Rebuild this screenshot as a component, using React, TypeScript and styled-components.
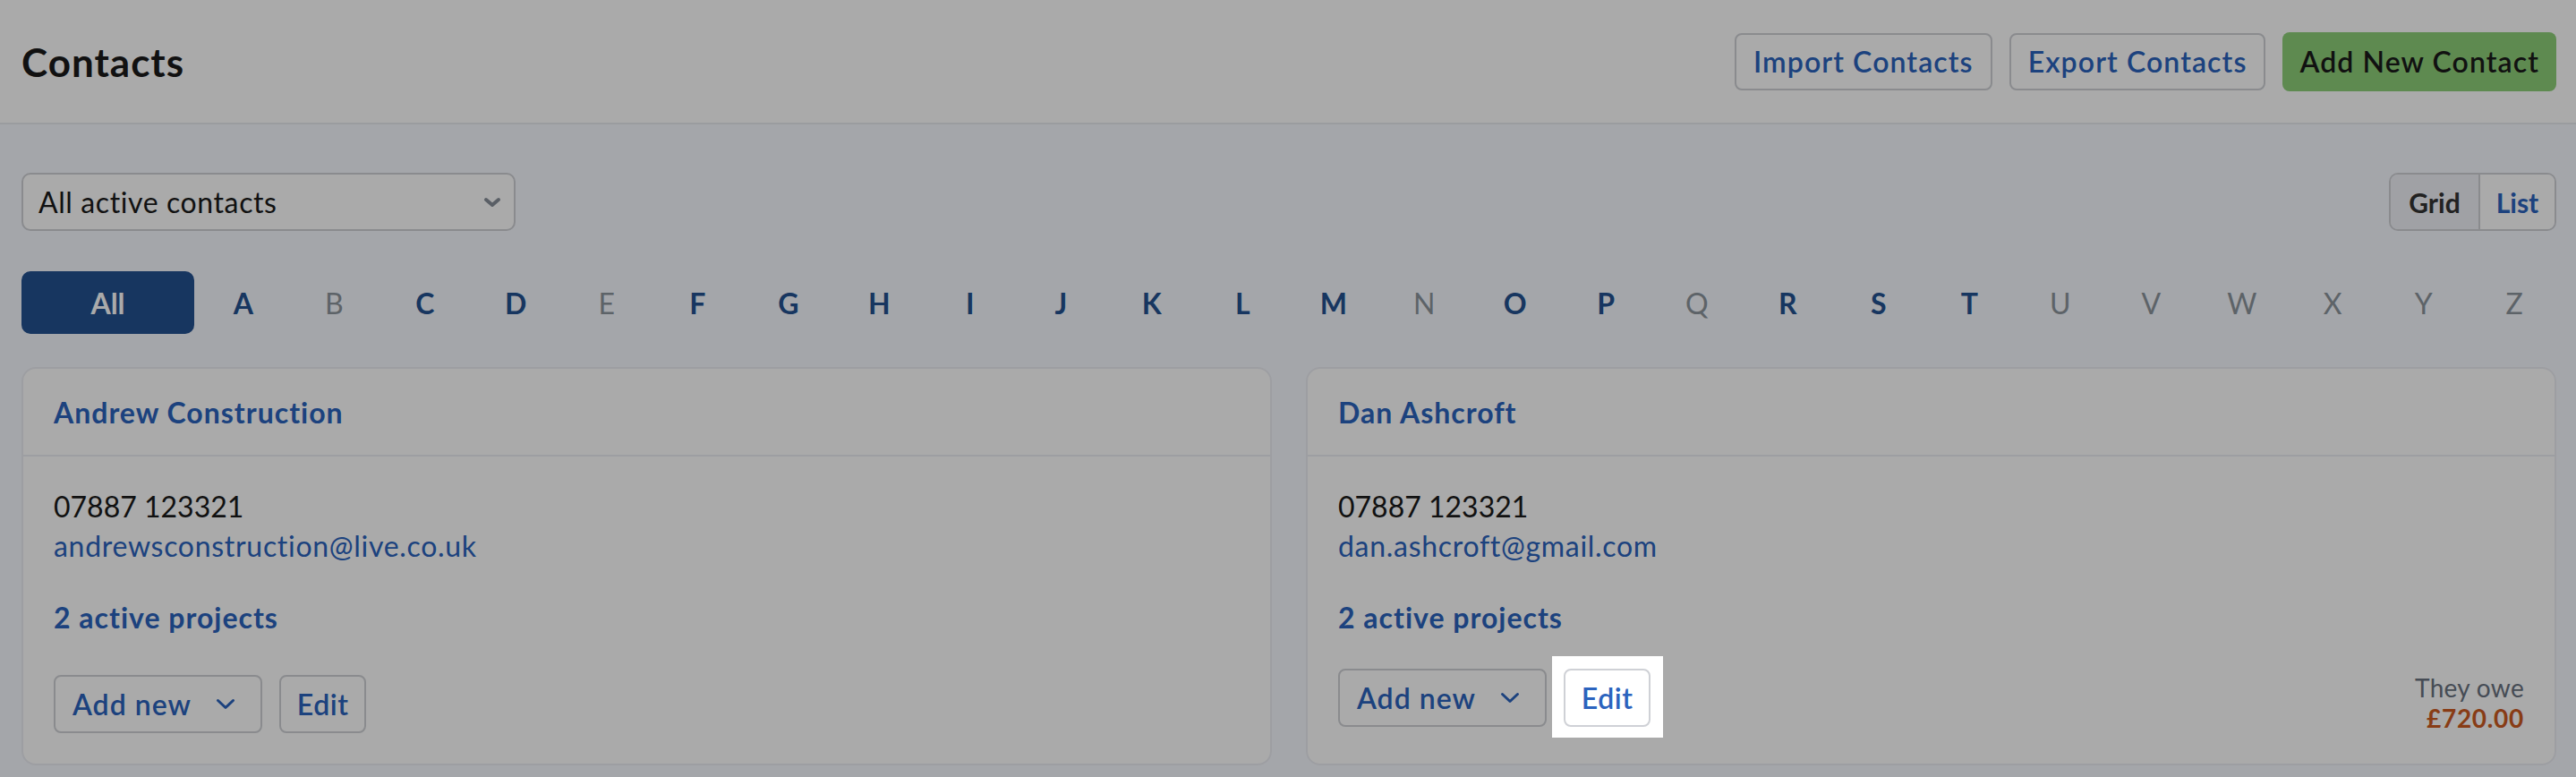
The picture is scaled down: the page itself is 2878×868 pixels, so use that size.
import React from "react";
import styled, { createGlobalStyle } from "styled-components";

const LINK = "#2b63be";
const NAVY = "#235190";
const LINE = "#cfd1d6";
const SOFT = "#eceef4";
const INK = "#1a1a1a";

const GlobalStyle = createGlobalStyle`
  * { box-sizing: border-box; }
  html, body { margin: 0; padding: 0; background: #f7f9ff; }
  body {
    min-height: 100vh;
    font-family: Lato, "Noto Sans", "Liberation Sans", sans-serif;
    color: ${INK};
  }
  button { font-family: inherit; cursor: pointer; }
`;

const Page = styled.div`
  min-height: 100vh;
`;

const Header = styled.header`
  height: 139px;
  display: flex;
  align-items: center;
  justify-content: space-between;
  padding: 0 22px 0 24px;
  background: #ffffff;
  border-bottom: 2px solid #e8eaef;
`;

const Title = styled.h1`
  margin: 0;
  font-size: 44px;
  line-height: 1;
  font-weight: 700;
  letter-spacing: 1px;
  color: ${INK};
`;

const HeaderActions = styled.div`
  display: flex;
  align-items: center;
  gap: 19px;
`;

const OutlineButton = styled.button`
  height: 64px;
  padding: 0 19px;
  border: 2px solid ${LINE};
  border-radius: 8px;
  background: #ffffff;
  color: ${LINK};
  font-size: 32px;
  font-weight: 600;
  letter-spacing: 1.1px;
`;

const PrimaryButton = styled.button`
  height: 66px;
  padding: 0 19px;
  border: none;
  border-radius: 8px;
  background: #8dcf78;
  color: ${INK};
  font-size: 32px;
  font-weight: 600;
  letter-spacing: 1.1px;
`;

const Main = styled.main`
  padding: 54px 22px 13px 24px;
`;

const Toolbar = styled.div`
  display: flex;
  align-items: center;
  justify-content: space-between;
`;

const SelectBox = styled.button`
  width: 552px;
  height: 65px;
  display: flex;
  align-items: center;
  justify-content: space-between;
  padding: 0 14px 0 17px;
  border: 2px solid ${LINE};
  border-radius: 10px;
  background: #ffffff;
  color: ${INK};
  font-size: 32px;
  font-weight: 400;
  letter-spacing: 0.6px;
`;

const ViewToggle = styled.div`
  display: flex;
  height: 65px;
  border: 2px solid ${LINE};
  border-radius: 10px;
  overflow: hidden;
`;

const ToggleOption = styled.button<{ $active?: boolean; $w: number }>`
  width: ${(p) => p.$w}px;
  height: 100%;
  border: none;
  border-right: ${(p) => (p.$active ? `2px solid ${LINE}` : "none")};
  background: ${(p) => (p.$active ? "#f0f2f8" : "#ffffff")};
  color: ${(p) => (p.$active ? "#333333" : LINK)};
  font-size: 30px;
  font-weight: 700;
  padding: 0;
`;

const AlphaBar = styled.nav`
  display: flex;
  align-items: center;
  gap: 8px;
  height: 70px;
  margin-top: 45px;
`;

const AllButton = styled.button`
  flex: none;
  width: 193px;
  height: 70px;
  border: none;
  border-radius: 10px;
  background: ${NAVY};
  color: #ffffff;
  font-size: 32px;
  font-weight: 700;
`;

const Letter = styled.button<{ $enabled: boolean }>`
  flex: 1;
  padding: 0;
  border: none;
  background: none;
  text-align: center;
  font-size: 32px;
  font-weight: ${(p) => (p.$enabled ? 700 : 400)};
  color: ${(p) => (p.$enabled ? NAVY : "#8c959c")};
`;

const CardGrid = styled.section`
  display: grid;
  grid-template-columns: 1fr 1fr;
  gap: 38px;
  margin-top: 37px;
`;

const Card = styled.article`
  display: flex;
  flex-direction: column;
  background: #ffffff;
  border: 2px solid ${SOFT};
  border-radius: 16px;
`;

const CardHeader = styled.div`
  height: 98px;
  display: flex;
  align-items: center;
  padding: 0 34px;
  border-bottom: 2px solid ${SOFT};
`;

const ContactName = styled.a`
  font-size: 32px;
  font-weight: 700;
  letter-spacing: 1px;
  color: ${LINK};
  text-decoration: none;
`;

const CardBody = styled.div`
  flex: 1;
  display: flex;
  flex-direction: column;
  padding: 34px 34px 34px;
`;

const Phone = styled.div`
  font-size: 32px;
  line-height: 44px;
  color: ${INK};
`;

const Email = styled.a`
  font-size: 32px;
  line-height: 44px;
  letter-spacing: 0.7px;
  color: ${LINK};
  text-decoration: none;
`;

const Projects = styled.a`
  margin-top: 36px;
  font-size: 32px;
  line-height: 44px;
  font-weight: 700;
  letter-spacing: 1px;
  color: ${LINK};
  text-decoration: none;
`;

const CardFooter = styled.div`
  margin-top: auto;
  padding-top: 35px;
  display: flex;
  align-items: flex-start;
  justify-content: space-between;
`;

const ButtonGroup = styled.div`
  display: flex;
  gap: 19px;
`;

const CardButton = styled.button`
  height: 65px;
  display: inline-flex;
  align-items: center;
  gap: 27px;
  padding: 0 18px;
  border: 2px solid ${LINE};
  border-radius: 8px;
  background: #ffffff;
  color: ${LINK};
  font-size: 32px;
  font-weight: 600;
  letter-spacing: 0.5px;
`;

const AddNewButton = styled(CardButton)`
  padding: 0 28px 0 19px;
  letter-spacing: 1px;
`;

const Spotlight = styled.span`
  position: relative;
  z-index: 10;
  display: inline-flex;
  &::before {
    content: "";
    position: absolute;
    top: -14px;
    bottom: -12px;
    left: -13px;
    right: -14px;
    background: #ffffff;
    box-shadow: 0 0 0 4000px rgba(0, 0, 0, 0.333);
    z-index: -1;
  }
`;

const Balance = styled.div`
  margin-top: 3px;
  text-align: right;
`;

const BalanceLabel = styled.div`
  font-size: 28px;
  line-height: 36px;
  letter-spacing: 0.3px;
  color: #697280;
`;

const BalanceAmount = styled.div`
  font-size: 28px;
  line-height: 33px;
  font-weight: 700;
  letter-spacing: 0.7px;
  color: #cc5a22;
`;

const Chevron = ({ w, h, sw, color }: { w: number; h: number; sw: number; color: string }) => (
  <svg width={w} height={h} viewBox={`0 0 ${w} ${h}`} fill="none">
    <path
      d={`M${sw / 2 + 1} ${sw / 2 + 1} L${w / 2} ${h - sw / 2 - 1} L${w - sw / 2 - 1} ${sw / 2 + 1}`}
      stroke={color}
      strokeWidth={sw}
      strokeLinecap="round"
      strokeLinejoin="round"
    />
  </svg>
);

const LETTERS = "ABCDEFGHIJKLMNOPQRSTUVWXYZ".split("");
const ENABLED = new Set("ACDFGHIJKLMOPRST".split(""));

type Contact = {
  name: string;
  phone: string;
  email: string;
  projects: number;
  owes?: string;
  spotlight?: boolean;
};

const CONTACTS: Contact[] = [
  {
    name: "Andrew Construction",
    phone: "07887 123321",
    email: "andrewsconstruction@live.co.uk",
    projects: 2,
  },
  {
    name: "Dan Ashcroft",
    phone: "07887 123321",
    email: "dan.ashcroft@gmail.com",
    projects: 2,
    owes: "£720.00",
    spotlight: true,
  },
];

const ContactCard = ({ c }: { c: Contact }) => {
  const edit = <CardButton>Edit</CardButton>;
  return (
    <Card>
      <CardHeader>
        <ContactName href="#">{c.name}</ContactName>
      </CardHeader>
      <CardBody>
        <Phone>{c.phone}</Phone>
        <Email href="#">{c.email}</Email>
        <Projects href="#">{c.projects} active projects</Projects>
        <CardFooter>
          <ButtonGroup>
            <AddNewButton>
              Add new
              <Chevron w={22} h={13} sw={3} color={LINK} />
            </AddNewButton>
            {c.spotlight ? <Spotlight>{edit}</Spotlight> : edit}
          </ButtonGroup>
          {c.owes && (
            <Balance>
              <BalanceLabel>They owe</BalanceLabel>
              <BalanceAmount>{c.owes}</BalanceAmount>
            </Balance>
          )}
        </CardFooter>
      </CardBody>
    </Card>
  );
};

export default function App() {
  return (
    <Page>
      <GlobalStyle />
      <Header>
        <Title>Contacts</Title>
        <HeaderActions>
          <OutlineButton>Import Contacts</OutlineButton>
          <OutlineButton>Export Contacts</OutlineButton>
          <PrimaryButton>Add New Contact</PrimaryButton>
        </HeaderActions>
      </Header>
      <Main>
        <Toolbar>
          <SelectBox>
            All active contacts
            <Chevron w={20} h={12} sw={4} color="#878f99" />
          </SelectBox>
          <ViewToggle>
            <ToggleOption $active $w={100}>Grid</ToggleOption>
            <ToggleOption $w={83}>List</ToggleOption>
          </ViewToggle>
        </Toolbar>
        <AlphaBar>
          <AllButton>All</AllButton>
          {LETTERS.map((l) => (
            <Letter key={l} $enabled={ENABLED.has(l)}>
              {l}
            </Letter>
          ))}
        </AlphaBar>
        <CardGrid>
          {CONTACTS.map((c) => (
            <ContactCard key={c.name} c={c} />
          ))}
        </CardGrid>
      </Main>
    </Page>
  );
}
